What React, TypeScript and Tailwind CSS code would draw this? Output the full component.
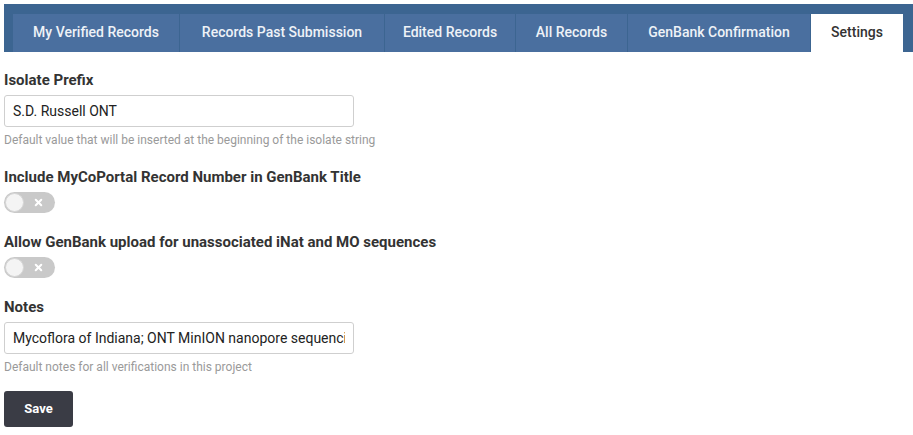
import { X } from "lucide-react";

const tabs = [
  { label: "My Verified Records", w: "w-[166px]" },
  { label: "Records Past Submission", w: "w-[204px]" },
  { label: "Edited Records", w: "w-[130px]" },
  { label: "All Records", w: "w-[111px]" },
  { label: "GenBank Confirmation", w: "w-[182px]" },
];

const Toggle = () => (
  <div className="relative mt-[4px] h-[21px] w-[51px] rounded-full bg-[#c9c9c9]">
    <div className="absolute left-[1px] top-[1px] h-[19px] w-[19px] rounded-full border border-[#d6d6d6] bg-[#f4f4f4]" />
    <X className="absolute left-[29px] top-[5px] h-[11px] w-[11px] text-white" strokeWidth={4.5} />
  </div>
);

const Label = ({ children }: { children: React.ReactNode }) => (
  <div className="text-[15px] font-bold leading-[22px] text-[#333]">{children}</div>
);

const Help = ({ children }: { children: React.ReactNode }) => (
  <div className="mt-[4px] text-[12px] leading-[18px] text-[#9a9a9a]">{children}</div>
);

export default function App() {
  return (
    <div className="min-h-[435px] bg-white pt-[4px] font-['Roboto',sans-serif]">
      <div className="ml-[4px] flex h-[48px] gap-px bg-[#3c6591] pl-[9px] pt-[10px]">
        {tabs.map((t) => (
          <div
            key={t.label}
            className={`${t.w} flex items-center justify-center bg-[#4a6f9f] pb-[2px] text-[14px] font-medium text-[#eef2f7]`}
          >
            {t.label}
          </div>
        ))}
        <div className="flex w-[92px] items-center justify-center bg-white pb-[2px] text-[14px] font-medium text-[#333]">
          Settings
        </div>
      </div>

      <div className="px-[4px] pt-[17px]">
        <Label>Isolate Prefix</Label>
        <input
          className="mt-[4px] block h-[32px] w-[350px] rounded-[3px] border border-[#cfcfcf] px-[8px] text-[14px] text-[#222] outline-none"
          defaultValue="S.D. Russell ONT"
        />
        <Help>Default value that will be inserted at the beginning of the isolate string</Help>

        <div className="mt-[17px]">
          <Label>Include MyCoPortal Record Number in GenBank Title</Label>
          <Toggle />
        </div>

        <div className="mt-[18px]">
          <Label>Allow GenBank upload for unassociated iNat and MO sequences</Label>
          <Toggle />
        </div>

        <div className="mt-[18px]">
          <Label>Notes</Label>
          <input
            className="mt-[4px] block h-[32px] w-[350px] rounded-[3px] border border-[#cfcfcf] px-[8px] text-[14px] text-[#222] outline-none"
            defaultValue="Mycoflora of Indiana; ONT MinION nanopore sequencing"
          />
          <Help>Default notes for all verifications in this project</Help>
        </div>

        <button className="mt-[15px] h-[36px] w-[69px] rounded-[3px] bg-[#3a3c45] text-[13px] font-bold text-white">
          Save
        </button>
      </div>
    </div>
  );
}
